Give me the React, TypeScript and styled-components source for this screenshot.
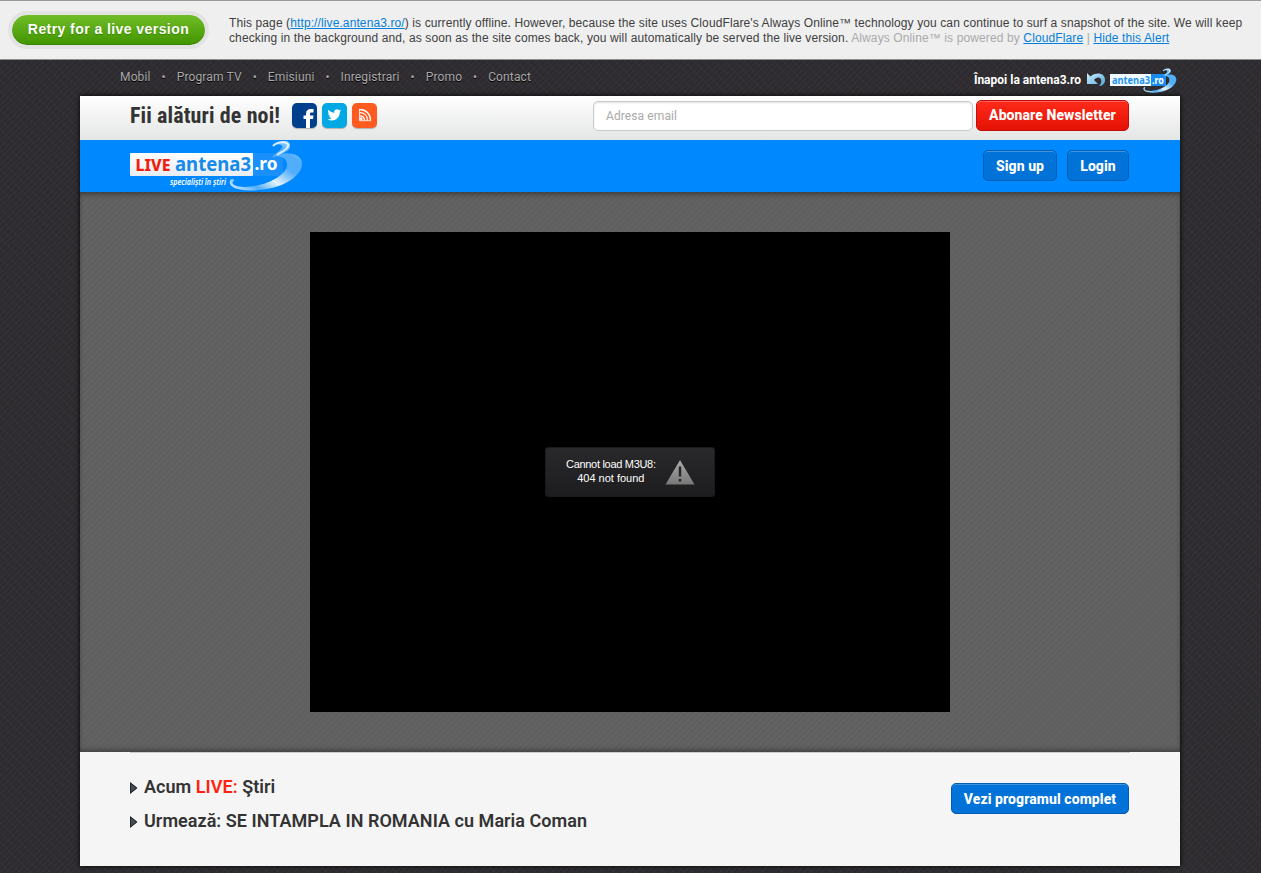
import React from "react";
import styled, { createGlobalStyle } from "styled-components";

const Global = createGlobalStyle`
  * { box-sizing: border-box; }
  html { background: #fff; }
  body { margin: 0; font-family: Roboto, sans-serif; overflow: hidden; }
  a { color: inherit; text-decoration: none; }
`;

const Page = styled.div`
  width: 1261px;
  height: 873px;
  overflow: hidden;
  background-color: #312f33;
  background-image:
    repeating-linear-gradient(135deg, rgba(0, 0, 0, 0.12) 0, transparent 2.12px, rgba(0, 0, 0, 0.12) 4.24px),
    repeating-linear-gradient(45deg, rgba(255, 255, 255, 0.015) 0 2px, transparent 2px 7px);
`;

const Alert = styled.div`
  display: flex;
  height: 60px;
  padding: 10px 0 0 8px;
  background: #efefef;
  border-top: 1px solid #999;
  border-bottom: 1px solid #8d8c8e;
`;

const RetryButton = styled.a`
  flex: none;
  width: 201px;
  height: 38px;
  border: 4px solid #e3e3e3;
  border-radius: 19px;
  background: linear-gradient(#70bd27, #419400) padding-box;
  box-shadow: inset 0 -1px 0 #398300;
  color: #fff;
  font: bold 14px/29px "Liberation Sans", sans-serif;
  letter-spacing: 0.43px;
  text-align: center;
  text-shadow: 0 1px 1px #388500;
  white-space: nowrap;
`;

const AlertText = styled.div`
  padding: 5px 0 0 20px;
  font: 12px/15px "Liberation Sans", sans-serif;
  color: #404040;
`;

const AlertLine = styled.div<{ $spacing: number }>`
  white-space: nowrap;
  letter-spacing: ${(p) => p.$spacing}px;
`;

const AlertLink = styled.a`
  && { color: #0480dc; text-decoration: underline; }
`;

const Muted = styled.span`
  color: #aaa;
`;

const TopNav = styled.div`
  display: flex;
  justify-content: space-between;
  height: 36px;
  padding: 0 84px 0 120px;
`;

const NavList = styled.ul`
  display: flex;
  margin: 0;
  padding: 8px 0 0;
  list-style: none;
  font-size: 12px;
  line-height: 18px;
  letter-spacing: 0.15px;
  color: #aaa;
  text-shadow: 0 1px 0 #000;
`;

const NavItem = styled.li`
  white-space: nowrap;
  & + &::before {
    content: "•";
    display: inline-block;
    width: 26px;
    text-align: center;
    font-size: 12px;
  }
`;

const BackLink = styled.a`
  display: flex;
  padding-top: 8px;
  color: #fff;
  font-size: 12px;
  line-height: 24px;
  font-weight: 700;
  white-space: nowrap;
`;

const BackIcon = styled.svg`
  margin: 4px 0 0 6px;
`;

const MiniLogo = styled.svg`
  margin-left: 5px;
`;

const Container = styled.main`
  width: 1100px;
  margin-left: 80px;
  box-shadow: 0 0 5px #000;
`;

const Subscribe = styled.div`
  display: flex;
  align-items: flex-start;
  height: 44px;
  padding: 4px 51px 0 50px;
  background: linear-gradient(#fff, #e4e5e5);
`;

const Join = styled.div`
  flex: none;
  width: 162px;
  font-size: 22px;
  line-height: 32px;
  font-weight: 700;
  font-stretch: condensed;
  letter-spacing: 0.12px;
  color: #333;
  white-space: nowrap;
`;

const Socials = styled.div`
  display: flex;
  gap: 5px;
  padding-top: 3px;
`;

const Social = styled.a<{ $color: string }>`
  width: 25px;
  height: 25px;
  border-radius: 5px;
  overflow: hidden;
  background: ${(p) => p.$color};
  box-shadow: 0 1px 1px rgba(0, 0, 0, 0.25);
  svg { display: block; }
`;

const EmailField = styled.div`
  width: 380px;
  height: 30px;
  margin: 1px 3px 0 auto;
  padding-left: 12px;
  border: 1px solid #c8caca;
  border-radius: 5px;
  background: #fff;
  box-shadow: inset 0 1px 2px rgba(0, 0, 0, 0.12);
  color: #aaa;
  font-size: 12px;
  line-height: 28px;
  letter-spacing: 0.1px;
`;

const Button = styled.a<{ $width: number; $tone?: "red" | "blue" }>`
  flex: none;
  display: block;
  width: ${(p) => p.$width}px;
  height: 31px;
  border: 1px solid ${(p) => (p.$tone === "red" ? "#c00e08" : "#005eb4")};
  border-radius: 5px;
  background: ${(p) => (p.$tone === "red" ? "linear-gradient(#ff2a1a, #e31204)" : "#0072d8")};
  box-shadow: inset 0 1px 0 ${(p) => (p.$tone === "red" ? "#ff6259" : "#3e96e2")};
  color: #fff;
  font-size: 14px;
  line-height: ${(p) => (p.$tone === "red" ? 29 : 31)}px;
  font-weight: 800;
  letter-spacing: 0.08px;
  text-align: center;
  white-space: nowrap;
`;

const Header = styled.header`
  display: flex;
  justify-content: space-between;
  height: 52px;
  padding: 0 51px 0 50px;
  background: #0088ff;
`;

const Account = styled.div`
  display: flex;
  gap: 10px;
  padding-top: 10px;
`;

const Stage = styled.section`
  display: flex;
  justify-content: center;
  height: 560px;
  padding-top: 40px;
  background-color: #636363;
  background-image: repeating-linear-gradient(135deg, rgba(0, 0, 0, 0.05) 0, transparent 2.12px, rgba(0, 0, 0, 0.05) 4.24px);
  box-shadow: inset 0 4px 5px -2px rgba(0, 0, 0, 0.4), inset 0 -4px 5px -2px rgba(0, 0, 0, 0.35);
`;

const Player = styled.div`
  display: flex;
  align-items: center;
  justify-content: center;
  width: 640px;
  height: 480px;
  background: #000;
`;

const ErrorBox = styled.div`
  display: flex;
  align-items: center;
  width: 170px;
  height: 50px;
  padding-left: 20px;
  gap: 9px;
  border: 1px solid #1b1b1d;
  border-radius: 3px;
  background: linear-gradient(#29292b, #1d1d1f);
  color: #fff;
  font: 11px/14px "Liberation Sans", sans-serif;
  text-align: center;
  white-space: nowrap;
`;

const Message = styled.div`
  padding-bottom: 2px;
`;

const MessageLine = styled.div<{ $spacing: number }>`
  letter-spacing: ${(p) => p.$spacing}px;
`;

const Program = styled.section`
  height: 114px;
  padding: 0 50px;
  background: #f5f5f5;
`;

const ProgramInner = styled.div`
  display: flex;
  justify-content: space-between;
  padding: 16px 1px 0 0;
  border-top: 1px solid #ccc;
`;

const Row = styled.div`
  display: flex;
  align-items: center;
  height: 34px;
  gap: 6px;
  font-size: 18px;
  font-weight: 600;
  letter-spacing: 0.04px;
  color: #333;
  white-space: pre;
  svg { margin-top: 3px; }
`;

const Live = styled.span`
  color: #ff2211;
`;

const ProgramAction = styled.div`
  padding-top: 14px;
`;

const logoFont = '"Noto Sans", "Open Sans", sans-serif';

function Swoosh({ id, from, to }: { id: string; from: string; to: string }) {
  return (
    <>
      <defs>
        <linearGradient id={id} x1="0" y1="1" x2="1" y2="0">
          <stop offset="0" stopColor={from} />
          <stop offset=".22" stopColor={to} />
          <stop offset=".4" stopColor={from} />
          <stop offset=".62" stopColor={to} />
          <stop offset=".78" stopColor={to} />
          <stop offset="1" stopColor={from} />
        </linearGradient>
      </defs>
      <path
        fill={`url(#${id})`}
        d="M142 6 C147 0 161 -1 160 6 C160 10 156 12 152 13.500 C164 12 173 16 172 25 C170 39 148 50.500 120 50.500 C106 50.500 98 46 100 41 C101 38 104 38 104 41 C100 43 104 47 115 47 C139 46 157 34 157 25 C157 17 150 15.500 142 17 C146 13 153 9 152 6 C151 4 147 4 142 6Z"
      />
      <path d="M143 6 C148 1 159 1 158 6 C157 10 151 12 147 15" fill="none" stroke="#fff" strokeWidth="2" strokeOpacity=".75" />
    </>
  );
}

function Arrow() {
  return (
    <svg width="8" height="12" viewBox="0 0 8 12">
      <path d="M0 0 L7.500 6 L0 12Z" fill="#444c54" />
      <path d="M.5 1 L6.700 6 L.5 11Z" fill="none" stroke="#1f252b" />
    </svg>
  );
}

export default function App() {
  return (
    <>
      <Global />
      <Page>
        <Alert>
          <RetryButton>Retry for a live version</RetryButton>
          <AlertText>
            <AlertLine $spacing={0.107}>
              This page (<AlertLink>http://live.antena3.ro/</AlertLink>) is currently offline. However, because the
              site uses CloudFlare's Always Online™ technology you can continue to surf a snapshot of the site. We will
              keep
            </AlertLine>
            <AlertLine $spacing={0.12}>
              checking in the background and, as soon as the site comes back, you will automatically be served the live
              version.{" "}
              <Muted>
                Always Online™ is powered by <AlertLink>CloudFlare</AlertLink> | <AlertLink>Hide this Alert</AlertLink>
              </Muted>
            </AlertLine>
          </AlertText>
        </Alert>

        <TopNav>
          <NavList>
            {["Mobil", "Program TV", "Emisiuni", "Inregistrari", "Promo", "Contact"].map((label) => (
              <NavItem key={label}>{label}</NavItem>
            ))}
          </NavList>
          <BackLink>
            Înapoi la antena3.ro
            <BackIcon width="18" height="16" viewBox="0 0 18 16">
              <defs>
                <linearGradient id="undo" x1="0" y1="0" x2="1" y2="1">
                  <stop offset="0" stopColor="#d3effd" />
                  <stop offset="1" stopColor="#49a8dc" />
                </linearGradient>
              </defs>
              <path fill="url(#undo)" d="M0 1 L3.500 4.500 C8 0 18 0 18 8 C18 12 15 14 12 14 C15.500 11 15 5.500 11.500 5.500 C9.500 5.500 8 6.500 7 8 L11 12 L0 12Z" />
            </BackIcon>
            <MiniLogo width="67" height="26" viewBox="0 0 67 26">
              <rect x="0" y="6" width="41" height="12" fill="#f2f9ff" />
              <rect x="41" y="6" width="15" height="12" fill="#168cf0" />
              <g transform="translate(-12 0) scale(.455 .49)">
                <Swoosh id="mini" from="#e2f3ff" to="#4fb0f8" />
              </g>
              <text x="2" y="15.500" textLength="38" lengthAdjust="spacingAndGlyphs" fontFamily={logoFont} fontWeight="700" fontSize="11" fill="#2392ef">antena3</text>
              <text x="42" y="15.500" textLength="12" lengthAdjust="spacingAndGlyphs" fontFamily={logoFont} fontWeight="700" fontSize="10" fill="#fff">.ro</text>
            </MiniLogo>
          </BackLink>
        </TopNav>

        <Container>
          <Subscribe>
            <Join>Fii alături de noi!</Join>
            <Socials>
              <Social $color="#003f8c">
                <svg width="25" height="25" viewBox="0 0 25 25">
                  <path fill="#fff" d="M14 25 V16 H11.500 V12.500 H14 V10.500 C14 7.500 16 6 18.500 6 H21.500 V9.500 H19.500 C18.300 9.500 18 10 18 11 V12.500 H21.500 L21 16 H18 V25Z" />
                </svg>
              </Social>
              <Social $color="#00a8e4">
                <svg width="25" height="25" viewBox="0 0 25 25">
                  <g transform="translate(5.500 5) scale(.57)">
                    <path fill="#fff" d="M23.950 4.570a10 10 0 0 1-2.820.770 4.960 4.960 0 0 0 2.160-2.720 9.900 9.900 0 0 1-3.120 1.190 4.920 4.920 0 0 0-8.380 4.480C7.690 8.090 4.070 6.130 1.640 3.160a4.920 4.920 0 0 0 1.520 6.570 4.900 4.900 0 0 1-2.230-.61v.06a4.920 4.920 0 0 0 3.950 4.830 5 5 0 0 1-2.210.08 4.940 4.940 0 0 0 4.600 3.420A9.870 9.870 0 0 1 0 19.540a14 14 0 0 0 7.550 2.210c9.050 0 14-7.500 14-13.980l-.02-.64a10 10 0 0 0 2.420-2.560z" />
                  </g>
                </svg>
              </Social>
              <Social $color="#ff5a1f">
                <svg width="25" height="25" viewBox="0 0 25 25" fill="none" stroke="#fff" strokeWidth="1.300">
                  <path d="M7.500 6.500 C14 6.500 18.500 11 18.500 17.500 M7.500 9.700 C12.500 9.700 15.500 13 15.500 17.500 M7.500 12.800 C11 12.800 12.500 15 12.500 17.500" />
                  <circle cx="9" cy="16" r="1" />
                  <path d="M7.500 6 V17.700 H19" strokeWidth=".8" />
                </svg>
              </Social>
            </Socials>
            <EmailField>Adresa email</EmailField>
            <Button $width={153} $tone="red">Abonare Newsletter</Button>
          </Subscribe>

          <Header>
            <svg width="174" height="52" viewBox="0 0 174 52">
              <defs>
                <linearGradient id="plate" x1="0" y1="0" x2="0" y2="1">
                  <stop offset="0" stopColor="#fff" />
                  <stop offset="1" stopColor="#e9edf1" />
                </linearGradient>
              </defs>
              <rect x="0" y="13" width="123" height="23" rx="1" fill="url(#plate)" />
              <rect x="123" y="13" width="30" height="23" fill="#1a90fc" />
              <Swoosh id="main" from="#e4f3ff" to="#52aefb" />
              <text x="5.500" y="31" textLength="35" lengthAdjust="spacingAndGlyphs" fontFamily={logoFont} fontWeight="800" fontSize="16.500" fill="#f11f12">LIVE</text>
              <text x="45" y="31" textLength="76" lengthAdjust="spacingAndGlyphs" fontFamily={logoFont} fontWeight="700" fontSize="20" fill="#168bea">antena3</text>
              <text x="124.500" y="30" textLength="23" lengthAdjust="spacingAndGlyphs" fontFamily={logoFont} fontWeight="700" fontSize="18" fill="#fff">.ro</text>
              <text x="40" y="45" textLength="56" lengthAdjust="spacingAndGlyphs" fontFamily={logoFont} fontStyle="italic" fontWeight="600" fontSize="8" fill="#fff">specialiști în știri</text>
            </svg>
            <Account>
              <Button $width={74}>Sign up</Button>
              <Button $width={62}>Login</Button>
            </Account>
          </Header>

          <Stage>
            <Player>
              <ErrorBox>
                <Message>
                  <MessageLine $spacing={-0.3}>Cannot load M3U8:</MessageLine>
                  <MessageLine $spacing={0}>404 not found</MessageLine>
                </Message>
                <svg width="30" height="26" viewBox="0 0 30 26">
                  <defs>
                    <linearGradient id="warn" x1="0" y1="0" x2="0" y2="1">
                      <stop offset="0" stopColor="#aaa" />
                      <stop offset="1" stopColor="#777" />
                    </linearGradient>
                  </defs>
                  <path d="M15 1 L29.500 25.500 H.5Z" fill="url(#warn)" />
                  <path d="M13.800 7.500 H16.200 V17.500 H13.800Z M13.800 20 H16.200 V22.500 H13.800Z" fill="#242426" />
                </svg>
              </ErrorBox>
            </Player>
          </Stage>

          <Program>
            <ProgramInner>
              <div>
                <Row>
                  <Arrow />
                  <span>Acum <Live>LIVE:</Live> Ştiri</span>
                </Row>
                <Row>
                  <Arrow />
                  <span>Urmează: SE INTAMPLA IN ROMANIA cu Maria Coman</span>
                </Row>
              </div>
              <ProgramAction>
                <Button $width={178}>Vezi programul complet</Button>
              </ProgramAction>
            </ProgramInner>
          </Program>
        </Container>
      </Page>
    </>
  );
}
